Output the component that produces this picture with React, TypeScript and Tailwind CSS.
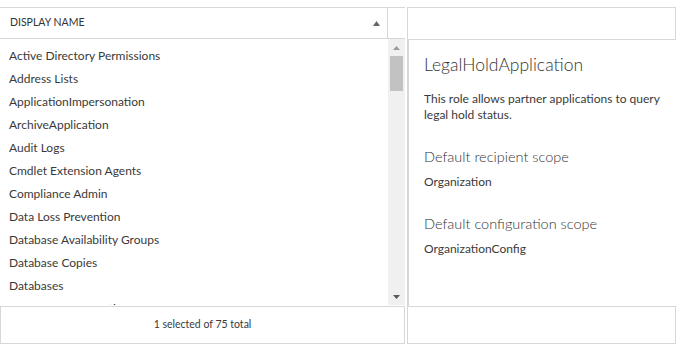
const roles = [
  'Active Directory Permissions',
  'Address Lists',
  'ApplicationImpersonation',
  'ArchiveApplication',
  'Audit Logs',
  'Cmdlet Extension Agents',
  'Compliance Admin',
  'Data Loss Prevention',
  'Database Availability Groups',
  'Database Copies',
  'Databases',
  'Data Center Operations',
];

function Triangle({ down = false }: { down?: boolean }) {
  return (
    <svg width="7" height="4" viewBox="0 0 7 4" className="block">
      {down ? <path d="M0 0h7L3.5 4z" fill="#5a5a5a" /> : <path d="M3.5 0L7 4H0z" fill="#9a9a9a" />}
    </svg>
  );
}

export default function App() {
  return (
    <div
      className="w-[683px] h-[346px] bg-white pt-[7px] flex gap-[2px] text-[#333]"
      style={{ fontFamily: 'Lato, "Noto Sans", sans-serif' }}
    >
      {/* List column */}
      <div className="w-[405px] flex flex-col">
        <div className="h-[32px] flex border-y border-[#d5d8da]">
          <div className="w-[388px] flex items-center justify-between pl-[10px] pr-[7px] border-r border-[#d5d8da]">
            <span className="text-[10.5px] text-[#333]">DISPLAY NAME</span>
            <svg width="7" height="5" viewBox="0 0 7 5" className="block">
              <path d="M3.5 0L7 5H0z" fill="#666" />
            </svg>
          </div>
          <div className="flex-1" />
        </div>

        <div className="h-[266px] flex overflow-hidden">
          <div className="w-[388px] pt-[5px] overflow-hidden">
            {roles.map((r) => (
              <div key={r} className="h-[23px] shrink-0 flex items-center pl-[9px] text-[12px] text-[#3a3a3a]">
                {r}
              </div>
            ))}
          </div>
          <div className="w-[17px] bg-[#f0f0f0] flex flex-col items-center">
            <div className="h-[17px] flex items-center justify-center">
              <Triangle />
            </div>
            <div className="w-[13px] h-[35px] bg-[#c2c2c2]" />
            <div className="flex-1" />
            <div className="h-[17px] flex items-center justify-center">
              <Triangle down />
            </div>
          </div>
        </div>

        <div className="mt-[1px] h-[38px] border border-[#d5d8da] flex items-center justify-center text-[10.5px] text-[#3a3a3a]">
          1 selected of 75 total
        </div>
      </div>

      {/* Detail column */}
      <div className="w-[269px] flex flex-col">
        <div className="h-[33px] border border-[#d5d8da]" />
        <div className="h-[266px] border-l-2 border-[#d5d8da] pl-[15px] pt-[13px]">
          <div className="text-[17.5px] font-light text-[#333] leading-[24px]">LegalHoldApplication</div>
          <div className="mt-[14px] text-[12px] leading-[16px] text-[#3a3a3a] w-[245px]">
            This role allows partner applications to query legal hold status.
          </div>
          <div className="mt-[24px] text-[14.5px] font-light leading-[20px] text-[#333]">Default recipient scope</div>
          <div className="mt-[7px] text-[12px] leading-[16px] text-[#3a3a3a]">Organization</div>
          <div className="mt-[24px] text-[14.5px] font-light leading-[20px] text-[#333]">Default configuration scope</div>
          <div className="mt-[7px] text-[12px] leading-[16px] text-[#3a3a3a]">OrganizationConfig</div>
        </div>
        <div className="h-[38px] border border-[#d5d8da]" />
      </div>
    </div>
  );
}
